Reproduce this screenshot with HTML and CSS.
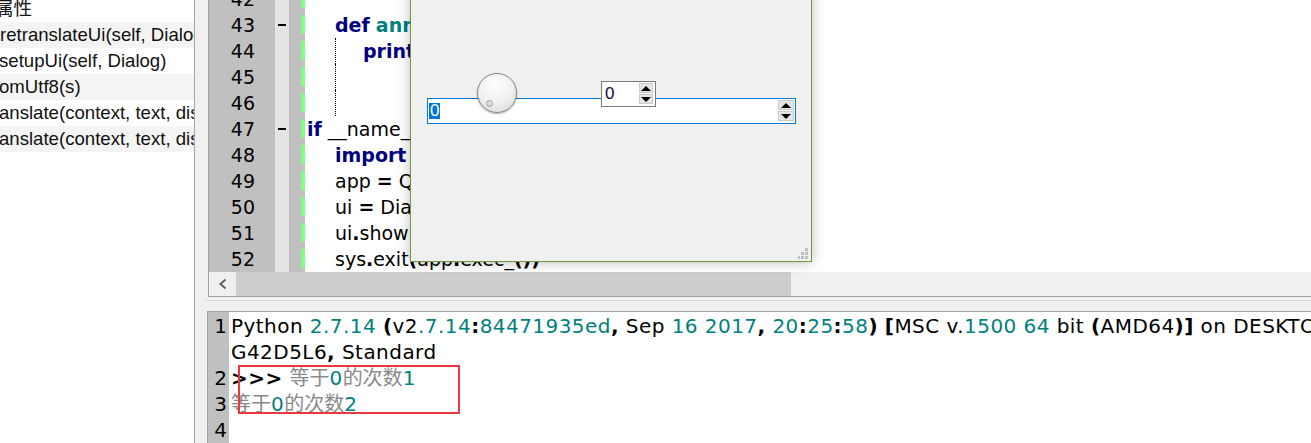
FILE: index.html
```html
<!DOCTYPE html>
<html lang="zh">
<head>
<meta charset="UTF-8">
<title>Python IDE</title>
<link rel="stylesheet" href="styles.css">
</head>
<body>

<div class="app">
  <aside class="outline">
    <ul class="outline-list">
      <li class="outline-row cut-5">属性</li>
      <li class="outline-row alt">retranslateUi(self, Dialog)</li>
      <li class="outline-row cut-1">setupUi(self, Dialog)</li>
      <li class="outline-row alt cut-1">omUtf8(s)</li>
      <li class="outline-row cut-1">anslate(context, text, disambig)</li>
      <li class="outline-row alt cut-1">anslate(context, text, disambig)</li>
    </ul>
  </aside>

  <main class="workspace">
    <section class="editor">
      <div class="line"><span class="ln">42</span><span class="fold"></span><span class="mark"></span><span class="code"></span></div>
      <div class="line"><span class="ln">43</span><span class="fold"><i class="dash"></i></span><span class="mark"></span><span class="code i1"><b class="kw">def</b> <b class="fn">anniu</b><b>(</b>self<b>):</b></span></div>
      <div class="line"><span class="ln">44</span><span class="fold"></span><span class="mark"></span><span class="code i2 guide"><b class="kw">print</b> self<b>.</b>count</span></div>
      <div class="line"><span class="ln">45</span><span class="fold"></span><span class="mark"></span><span class="code guide"></span></div>
      <div class="line"><span class="ln">46</span><span class="fold"></span><span class="mark"></span><span class="code guide"></span></div>
      <div class="line"><span class="ln">47</span><span class="fold"><i class="dash"></i></span><span class="mark"></span><span class="code"><b class="kw">if</b> __name__ <b>==</b> <span class="str">'__main__'</span><b>:</b></span></div>
      <div class="line"><span class="ln">48</span><span class="fold"></span><span class="mark"></span><span class="code i1"><b class="kw">import</b> sys</span></div>
      <div class="line"><span class="ln">49</span><span class="fold"></span><span class="mark"></span><span class="code i1">app <b>=</b> QtGui<b>.</b>QApplication<b>(</b>sys<b>.</b>argv<b>)</b></span></div>
      <div class="line"><span class="ln">50</span><span class="fold"></span><span class="mark"></span><span class="code i1">ui <b>=</b> Dialog<b>()</b></span></div>
      <div class="line"><span class="ln">51</span><span class="fold"></span><span class="mark"></span><span class="code i1">ui<b>.</b>show<b>()</b></span></div>
      <div class="line"><span class="ln">52</span><span class="fold"></span><span class="mark"></span><span class="code i1">sys<b>.</b>exit<b>(</b>app<b>.</b>exec_<b>())</b></span></div>

      <div class="hscroll">
        <span class="hscroll-btn">
          <svg width="10" height="12" viewBox="0 0 10 12"><path d="M7.5 1.5 L2.5 6 L7.5 10.5" fill="none" stroke="#606060" stroke-width="2"/></svg>
        </span>
        <span class="hscroll-thumb"></span>
      </div>
    </section>

    <div class="split"><div class="split-line"></div></div>

    <section class="console">
      <div class="crow"><span class="cln">1</span><span class="ctext">Python <span class="num">2.7.14</span> <b>(</b>v2<span class="num">.7.14</span><b>:</b><span class="num">84471935ed</span><b>,</b> Sep <span class="num">16</span> <span class="num">2017</span><b>,</b> <span class="num">20</span><b>:</b><span class="num">25</span><b>:</b><span class="num">58</span><b>)</b> <b>[</b>MSC v.<span class="num">1500</span> <span class="num">64</span> bit <b>(</b>AMD64<b>)]</b> on DESKTOP-</span></div>
      <div class="crow"><span class="cln"></span><span class="ctext">G42D5L6<b>,</b> Standard</span></div>
      <div class="crow"><span class="cln">2</span><span class="ctext"><b>&gt;&gt;&gt;</b> <span class="cjk">等于</span><span class="num">0</span><span class="cjk">的次数</span><span class="num">1</span></span></div>
      <div class="crow"><span class="cln">3</span><span class="ctext"><span class="cjk">等于</span><span class="num">0</span><span class="cjk">的次数</span><span class="num">2</span></span></div>
      <div class="crow"><span class="cln">4</span><span class="ctext"></span></div>
      <div class="highlight-box"></div>
    </section>
  </main>
</div>

<div class="dialog">
  <div class="spinbox wide">
    <span class="spin-value"><span class="selected">0</span></span>
    <span class="spin-btns">
      <span class="spin-btn up"></span>
      <span class="spin-btn down"></span>
    </span>
  </div>
  <div class="dial"><span class="dial-notch"></span></div>
  <div class="spinbox small">
    <span class="spin-value">0</span>
    <span class="spin-btns">
      <span class="spin-btn up"></span>
      <span class="spin-btn down"></span>
    </span>
  </div>
  <svg class="grip" width="11" height="12" viewBox="0 0 11 12">
    <rect x="7" y="0" width="3" height="3"/>
    <rect x="3" y="4" width="3" height="3"/>
    <rect x="7" y="4" width="3" height="3"/>
    <rect x="0" y="8" width="2" height="3"/>
    <rect x="3" y="8" width="3" height="3"/>
    <rect x="7" y="8" width="3" height="3"/>
  </svg>
</div>

</body>
</html>
```

FILE: styles.css
```css
* {
  box-sizing: border-box;
}
body {
  margin: 0;
  width: 1311px;
  height: 443px;
  overflow: hidden;
  position: relative;
  background: #f0f0f0;
  font-family: "DejaVu Sans", "Noto Sans CJK SC", sans-serif;
  color: #000;
}
b {
  font-weight: bold;
}
.app {
  display: flex;
  height: 443px;
}

/* outline panel */
.outline {
  width: 195px;
  flex-shrink: 0;
  background: #fff;
  border-right: 1px solid #a8a8a8;
  overflow: hidden;
  font-family: "Liberation Sans", "Noto Sans CJK SC", sans-serif;
  font-size: 18.6px;
  color: #111;
}
.outline-list {
  list-style: none;
  margin: -4px 0 0;
  padding: 0;
}
.outline-row {
  height: 26px;
  line-height: 26px;
  white-space: nowrap;
}
.outline-row.alt {
  background: #f4f4f4;
}
.cut-5 {
  text-indent: -5px;
}
.cut-1 {
  text-indent: -1px;
}

/* editor */
.workspace {
  flex: 1;
  min-width: 0;
  display: flex;
  flex-direction: column;
}
.editor {
  margin: -14px 0 0 13px;
  background: #fff;
  border-left: 1px solid #a0a0a0;
  border-bottom: 1px solid #a0a0a0;
}
.line {
  display: flex;
  height: 26px;
  line-height: 26px;
  font-size: 19px;
  white-space: nowrap;
}
.ln {
  width: 66px;
  flex-shrink: 0;
  background: #c0c0c0;
  text-align: right;
  padding-right: 20px;
}
.fold {
  width: 14px;
  flex-shrink: 0;
  background: #e4e4e4;
  display: flex;
  align-items: center;
  justify-content: center;
}
.dash {
  width: 8px;
  height: 2px;
  margin-bottom: 1px;
  background: #000;
}
.mark {
  width: 16px;
  flex-shrink: 0;
  background: #c0c0c0;
  display: flex;
  justify-content: flex-end;
  padding-top: 3px;
}
.mark::after {
  content: "";
  width: 4px;
  height: 19px;
  background: #80ff80;
}
.code {
  flex: 1;
  position: relative;
  padding-left: 2px;
}
.code.i1 {
  padding-left: 30px;
}
.code.i2 {
  padding-left: 58px;
}
.guide::before {
  content: "";
  position: absolute;
  left: 30px;
  top: 0;
  bottom: 0;
  border-left: 1px dotted #000;
}
.kw {
  color: #00007f;
}
.fn {
  color: #007f7f;
}
.str {
  color: #7f007f;
}
.num {
  color: #007f7f;
}

.hscroll {
  display: flex;
  height: 24px;
  background: #f0f0f0;
}
.hscroll-btn {
  width: 27px;
  display: flex;
  align-items: center;
  justify-content: center;
}
.hscroll-thumb {
  width: 555px;
  background: #cdcdcd;
}

.split {
  height: 14px;
  padding: 3px 0 0 10px;
}
.split-line {
  height: 1px;
  background: #d6d6d6;
}

/* console */
.console {
  flex: 1;
  position: relative;
  margin-left: 12px;
  padding-top: 1px;
  border-top: 1px solid #a0a0a0;
  border-left: 1px solid #a0a0a0;
  background: linear-gradient(to right, #c0c0c0 21px, #fff 21px);
  font-size: 20px;
}
.crow {
  display: flex;
  height: 26px;
  line-height: 26px;
  white-space: nowrap;
}
.cln {
  width: 21px;
  flex-shrink: 0;
  text-align: right;
  padding-right: 2px;
}
.ctext {
  padding-left: 2px;
  letter-spacing: 0.45px;
}
.cjk {
  color: #8a8a8a;
  letter-spacing: 0;
}
.highlight-box {
  position: absolute;
  left: 30px;
  top: 53px;
  width: 222px;
  height: 49px;
  border: 2px solid #e8393e;
}

/* dialog window */
.dialog {
  position: absolute;
  left: 410px;
  top: -40px;
  width: 402px;
  height: 302px;
  background: #f0f0f0;
  border: 1px solid #6d9a3f;
  box-shadow: 0 0 12px rgba(0, 0, 0, 0.28);
  font-family: "Liberation Sans", sans-serif;
  font-size: 17px;
}
.spinbox {
  position: absolute;
  display: flex;
  justify-content: space-between;
  background: #fff;
}
.spinbox.wide {
  left: 16px;
  top: 137px;
  width: 369px;
  height: 26px;
  border: 1px solid #0078d7;
  padding: 1px;
}
.spinbox.small {
  left: 190px;
  top: 120px;
  width: 55px;
  height: 26px;
  border: 1px solid #7a7a7a;
  padding: 1px 2px 1px 3px;
}
.spin-value {
  display: flex;
  align-items: center;
  color: #0a0a30;
}
.selected {
  background: #0078d7;
  color: #fff;
  line-height: 16px;
  padding: 0 1px;
}
.spin-btns {
  display: flex;
  flex-direction: column;
  gap: 1px;
}
.spinbox.wide .spin-btns {
  width: 16px;
}
.spinbox.small .spin-btns {
  width: 14px;
}
.spin-btn {
  height: 10px;
  background: #e5e5e5;
  border: 1px solid #cacaca;
  display: flex;
  align-items: center;
  justify-content: center;
}
.spin-btn::before {
  content: "";
  border-left: 5px solid transparent;
  border-right: 5px solid transparent;
}
.spin-btn.up::before {
  border-bottom: 5px solid #000;
}
.spin-btn.down::before {
  border-top: 5px solid #000;
}
.dial {
  position: absolute;
  left: 66px;
  top: 112px;
  width: 40px;
  height: 40px;
  border-radius: 50%;
  border: 1px solid #858585;
  background: radial-gradient(circle at 45% 30%, #ffffff 0%, #eeeeee 55%, #d4d4d4 100%);
  box-shadow: 0 1px 2px rgba(0, 0, 0, 0.3);
}
.dial-notch {
  position: absolute;
  left: 8px;
  top: 26px;
  width: 7px;
  height: 7px;
  border-radius: 50%;
  border: 1px solid #a0a0a0;
  background: #dcdcdc;
}
.grip {
  position: absolute;
  right: 2px;
  bottom: 1px;
  fill: #c0c0c0;
}
```
